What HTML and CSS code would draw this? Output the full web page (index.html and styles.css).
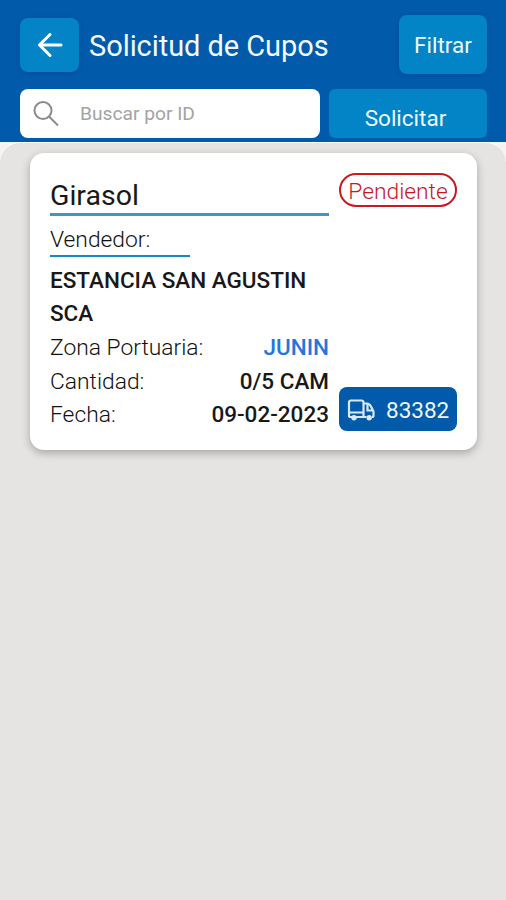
FILE: index.html
```html
<!DOCTYPE html>
<html lang="es">

<head>
	<meta charset="UTF-8">
	<title>Solicitud de Cupos</title>
	<link rel="stylesheet" href="styles.css">
</head>

<body>
	<header class="header">
		<div class="top">
			<button class="btn back" aria-label="Volver">
				<svg width="26" height="26" viewBox="0 0 26 26">
					<path d="M24 13H3M13 2.500L2.500 13L13 23.500" />
				</svg>
			</button>
			<h1 class="title">Solicitud de Cupos</h1>
			<button class="btn filter">Filtrar</button>
		</div>
		<div class="tools">
			<label class="search">
				<svg width="26" height="26" viewBox="0 0 26 26">
					<circle cx="10" cy="9.500" r="8.500" />
					<path d="M16 15.500L25 24.500" />
				</svg>
				<input type="text" placeholder="Buscar por ID">
			</label>
			<button class="btn request">Solicitar</button>
		</div>
	</header>
	<main class="content">
		<div class="card">
			<div class="info">
				<h2 class="product">Girasol</h2>
				<div class="seller-label">Vendedor:</div>
				<div class="seller">ESTANCIA SAN AGUSTIN SCA</div>
				<div class="row"><span class="name">Zona Portuaria:</span><span class="value zone">JUNIN</span></div>
				<div class="row"><span class="name">Cantidad:</span><span class="value amount">0/5 CAM</span></div>
				<div class="row"><span class="name">Fecha:</span><span class="value">09-02-2023</span></div>
			</div>
			<div class="side">
				<span class="status">Pendiente</span>
				<span class="number">
					<svg width="28" height="22" viewBox="0 0 28 22">
						<path d="M5 18H3.500q-1.500 0-1.500-1.500V3.500Q2 1.500 4 1.500H14.500q2 0 2 2V18H9M2 13.500h14.500M16.500 4.500h3.500q2.500 0 4 3l2.500 5v4q0 1.500-1.500 1.500M19.500 18h-3M20.500 5v6.500h5.500" />
						<circle class="wheel" cx="7" cy="18.800" r="1.600" />
						<circle class="wheel" cx="22.200" cy="18.800" r="1.600" />
					</svg>
					83382
				</span>
			</div>
		</div>
	</main>
</body>

</html>
```
FILE: styles.css
```css
* {
	box-sizing: border-box;
}

body {
	margin: 0;
	min-height: 900px;
	display: flex;
	flex-direction: column;
	font-family: Roboto, "Liberation Sans", sans-serif;
	background-color: #f5f4f2;
}

.header {
	height: 142px;
	padding: 15px 19px 0 20px;
	background-color: #015aaa;
}

.top {
	display: flex;
	align-items: center;
	height: 59px;
}

.btn {
	padding: 0;
	border: none;
	border-radius: 8px;
	background-color: #0284c7;
	color: #f0f9ff;
	font-family: inherit;
	font-size: 22px;
	box-shadow: 0 1px 4px rgba(0, 30, 90, 0.2);
}

.back {
	display: flex;
	align-items: center;
	justify-content: center;
	width: 59px;
	height: 54px;
}

.back svg {
	fill: none;
	stroke: #fff;
	stroke-width: 3;
	stroke-linecap: round;
	stroke-linejoin: round;
}

.title {
	margin: 0 auto 0 10px;
	padding-top: 3px;
	color: #f4faff;
	font-size: 29px;
	font-weight: 400;
	letter-spacing: -0.060px;
	white-space: nowrap;
}

.filter {
	width: 88px;
	height: 59px;
	font-size: 22.500px;
}

.tools {
	display: flex;
	gap: 9px;
	margin-top: 15px;
}

.search {
	display: flex;
	align-items: center;
	width: 300px;
	height: 49px;
	padding-left: 13px;
	border-radius: 8px;
	background-color: #fff;
}

.search svg {
	flex: none;
	fill: none;
	stroke: #8b8b8b;
	stroke-width: 2;
}

.search input {
	width: 220px;
	margin-left: 21px;
	padding: 0;
	border: none;
	outline: none;
	font-family: inherit;
	font-size: 19.200px;
}

.search input::placeholder {
	color: #a3a3a3;
}

.request {
	width: 158px;
	height: 49px;
	padding: 9px 5px 0 0;
	border-radius: 6px;
	font-size: 22.500px;
	box-shadow: none;
}

.content {
	flex: 1;
	padding: 10px 29px 0 30px;
	border-top: 1px solid #fff;
	border-radius: 20px 20px 0 0;
	background-color: #e5e4e2;
}

.card {
	display: flex;
	gap: 10px;
	height: 297px;
	padding: 20px 20px 19px;
	border-radius: 14px;
	background-color: #fff;
	box-shadow: 0 3px 8px rgba(0, 0, 0, 0.28);
}

.info {
	width: 279px;
	color: #181818;
	font-size: 22.500px;
	line-height: 33.700px;
}

.product {
	height: 43px;
	margin: 0;
	padding-top: 4px;
	border-bottom: 3px solid #3d96c9;
	font-size: 28.500px;
	font-weight: 400;
	line-height: 38px;
}

.seller-label {
	width: 140px;
	height: 41px;
	padding-top: 7px;
	border-bottom: 2px solid #168abb;
	color: #111;
	font-size: 22.800px;
	font-weight: 300;
}

.seller {
	margin-top: 6.600px;
	font-weight: 500;
}

.row {
	display: flex;
	justify-content: space-between;
}

.name {
	color: #111;
	font-size: 22.800px;
	font-weight: 300;
}

.value {
	font-weight: 500;
}

.zone {
	color: #2476dc;
}

.side {
	display: flex;
	flex-direction: column;
	justify-content: space-between;
	width: 118px;
}

.status {
	height: 34px;
	padding-top: 1px;
	border: 2px solid #c9191e;
	border-radius: 17px;
	color: #c9191e;
	font-size: 22.800px;
	font-weight: 300;
	line-height: 32px;
	text-align: center;
}

.number {
	display: flex;
	align-items: center;
	gap: 11px;
	height: 44px;
	padding: 2px 0 0 8px;
	border-radius: 8px;
	background-color: #015aaa;
	color: #edf6ff;
	font-size: 22.500px;
}

.number svg {
	fill: none;
	stroke: #d8eafa;
	stroke-width: 2.200;
}

.number .wheel {
	fill: #d8eafa;
}
```
